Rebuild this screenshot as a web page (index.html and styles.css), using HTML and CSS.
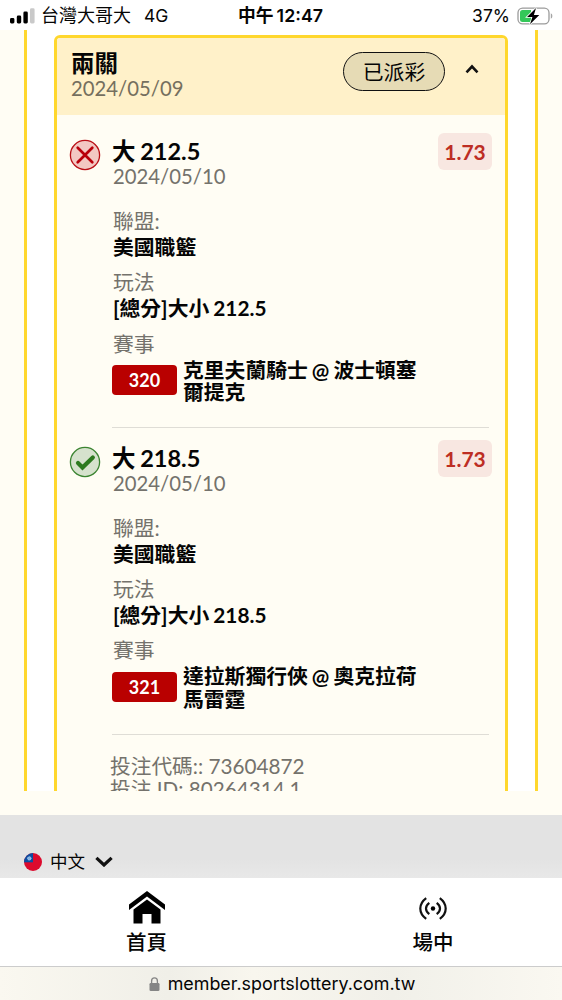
FILE: index.html
```html
<!DOCTYPE html>
<html lang="zh-Hant">
<head>
<meta charset="utf-8">
<title>投注紀錄</title>
<link rel="stylesheet" href="styles.css">
</head>
<body>
<div class="phone">
  <header class="status">
    <div class="carrier">
      <svg class="signal" width="25" height="16" viewBox="0 0 25 16"><rect x="0" y="10" width="4.4" height="5.5" rx="1.4"/><rect x="6.8" y="7.5" width="4.4" height="8" rx="1.4"/><rect x="13.4" y="3.5" width="4.4" height="12" rx="1.4"/><rect x="20" y="0.3" width="4.6" height="15.2" rx="1.4" fill="#c9c9c9"/></svg>
      <span class="carrier-name">台灣大哥大</span><span class="network">4G</span>
    </div>
    <div class="clock"><span>中午</span><span class="time">12:47</span></div>
    <div class="power">
      <span>37%</span>
      <svg width="36" height="18" viewBox="0 0 36 18"><rect x="1" y="1.2" width="31" height="15.6" rx="4.6" fill="#fff" stroke="#9b9b9b" stroke-width="1.3"/><path d="M33.800 6.300q1.600.6 1.600 2.700t-1.600 2.700z" fill="#a5a5a5"/><path d="M5.500 3H14v12H5.500Q3 15 3 12.500V5.500Q3 3 5.500 3z" fill="#34c759"/><path d="M19 1 10 10h5.400l-2.400 7.300L22.300 8h-5.400z" stroke="#fff" stroke-width="1.600" paint-order="stroke"/></svg>
    </div>
  </header>

  <main class="page">
    <div class="panel">
      <section class="ticket">
        <div class="ticket-head">
          <div class="ticket-title"><h1>兩關</h1><p class="date">2024/05/09</p></div>
          <span class="paid">已派彩</span>
          <svg class="caret" width="14" height="10" viewBox="0 0 14 10"><path d="M1.500 8.300 7 2.500l5.500 5.800" fill="none" stroke="#111" stroke-width="2.600"/></svg>
        </div>

        <article class="leg">
          <svg class="mark" width="32" height="32" viewBox="0 0 32 32"><circle cx="16" cy="16" r="14.600" fill="#f3c8c3" stroke="#b90f16" stroke-width="1.300"/><path d="M8.700 8.700l14.600 14.600M23.300 8.700 8.700 23.300" stroke="#b9000b" stroke-width="2.700" stroke-linecap="round"/></svg>
          <div class="leg-body">
            <div class="leg-top"><div><h2>大 212.5</h2><p class="date">2024/05/10</p></div><span class="odds">1.73</span></div>
            <dl>
              <dt>聯盟:</dt><dd>美國職籃</dd>
              <dt>玩法</dt><dd>[總分]大小 212.5</dd>
              <dt>賽事</dt>
              <dd class="match"><span class="code">320</span><span class="teams">克里夫蘭騎士 @ 波士頓塞<br>爾提克</span></dd>
            </dl>
          </div>
        </article>

        <article class="leg">
          <svg class="mark" width="32" height="32" viewBox="0 0 32 32"><circle cx="16" cy="16" r="14.600" fill="#d6e2cd" stroke="#3b8431" stroke-width="1.300"/><path d="M9 17l4.500 4.500L23.800 11.500" fill="none" stroke="#2d7a1f" stroke-width="4.200" stroke-linecap="round" stroke-linejoin="miter"/></svg>
          <div class="leg-body">
            <div class="leg-top"><div><h2>大 218.5</h2><p class="date">2024/05/10</p></div><span class="odds">1.73</span></div>
            <dl>
              <dt>聯盟:</dt><dd>美國職籃</dd>
              <dt>玩法</dt><dd>[總分]大小 218.5</dd>
              <dt>賽事</dt>
              <dd class="match"><span class="code">321</span><span class="teams">達拉斯獨行俠 @ 奧克拉荷<br>馬雷霆</span></dd>
            </dl>
          </div>
        </article>

        <div class="ids"><p>投注代碼:: 73604872</p><p>投注 ID: 80264314.1</p></div>
      </section>
    </div>
  </main>

  <footer class="language">
    <svg width="18" height="18" viewBox="0 0 18 18"><clipPath id="disc"><circle cx="9" cy="9" r="9"/></clipPath><g clip-path="url(#disc)"><rect width="18" height="18" fill="#dc0a2d"/><rect width="9" height="9.300" fill="#0b4ea2"/><circle cx="5.300" cy="5.400" r="1.700" fill="#7db0e4" stroke="#d5e7fa" stroke-width="1" stroke-dasharray=".7 .4"/></g></svg>
    <span>中文</span>
    <svg width="18" height="11" viewBox="0 0 18 11"><path d="M1.400 1.800 9 9l7.600-7.200" fill="none" stroke="#111" stroke-width="3.200"/></svg>
  </footer>

  <nav class="tabs">
    <a class="tab">
      <svg width="38" height="34" viewBox="0 0 38 34"><path d="M19 0 37 13.500V19L19 5.500 1 19v-5.500z"/><path d="M19 8.500 32.500 18.500V32.500h-9v-9.500h-9v9.500h-9v-14z"/></svg>
      <span>首頁</span>
    </a>
    <a class="tab">
      <svg width="38" height="34" viewBox="0 0 38 34"><circle cx="19" cy="17.500" r="2.200"/><g fill="none" stroke="#111" stroke-width="2.200"><path d="M12.200 7.100Q6.300 11.500 6.300 17.500T12.200 27.900M25.800 7.100Q31.700 11.500 31.700 17.500T25.800 27.900"/><path d="M15.300 11.800Q12 14.300 12 17.500t3.300 5.700M22.700 11.800Q26 14.300 26 17.500t-3.300 5.700"/></g></svg>
      <span>場中</span>
    </a>
  </nav>

  <div class="address">
    <svg width="11" height="14" viewBox="0 0 11 14"><rect x=".5" y="6" width="10" height="8" rx="1.300" fill="#858585"/><path d="M2.600 6.500V3.900a2.900 3 0 0 1 5.800 0v2.600" fill="none" stroke="#858585" stroke-width="1.300"/></svg>
    <span>member.sportslottery.com.tw</span>
  </div>
</div>
</body>
</html>
```
FILE: styles.css
```css
* { box-sizing: border-box; }
body, h1, h2, p, dl, dt, dd { margin: 0; }
svg { display: block; flex: none; }
body { background: #fff; color: #050505; font-family: Lato, "Noto Sans CJK TC", sans-serif; }
.phone { width: 562px; height: 1000px; overflow: hidden; display: flex; flex-direction: column; background: #fffdf4; }

.status { height: 30px; flex: none; display: grid; grid-template-columns: 1fr auto 1fr; align-items: center; padding: 1px 9px 0 10px; background: #fff; font: 18px/29px Inter, "Noto Sans CJK TC", sans-serif; }
.carrier, .clock, .power { display: flex; align-items: center; white-space: nowrap; }
.carrier-name { margin-left: 6px; }
.network { margin-left: 13px; font-size: 17.500px; }
.clock { font-size: 17.800px; font-weight: 600; gap: 3px; margin-right: 2px; }
.power { justify-content: flex-end; gap: 7px; font-size: 17.500px; }

.page { height: 761px; flex: none; padding: 0 24px; }
.panel { height: 761px; overflow: hidden; padding: 5px 27px 0; background: #fff; border: solid #ffd72d; border-width: 0 3px; }
.ticket { height: 900px; background: #fffdf4; border: 3px solid #ffd72d; border-radius: 6px; }
.ticket-head { height: 77px; display: flex; align-items: flex-start; padding: 12px 26px 0 14px; background: #fff1c9; border-radius: 3px 3px 0 0; }
.ticket-title { flex: 1; }
.ticket-title h1 { font-size: 23.500px; line-height: 26px; }
.date { font-size: 20.300px; line-height: 24px; color: #74726c; }
.ticket-head .date { color: #756f5e; }
.paid { width: 102px; height: 39px; margin-top: 2px; border: 1.500px solid #111; border-radius: 20px; background: #e6dbb5; font-size: 20.800px; line-height: 37px; text-align: center; }
.caret { margin: 14px 0 0 20px; }

.leg { height: 306.500px; display: flex; padding: 18px 13px 0 12px; }
.mark { margin-top: 6px; }
.leg-body { flex: 1; height: 295px; margin-left: 11px; }
.leg-top { height: 75px; display: flex; justify-content: space-between; align-items: flex-start; padding-top: 5px; }
.leg-top h2 { font-size: 23.500px; line-height: 26px; word-spacing: -1px; }
.leg-top .date { padding-left: 1px; }
.odds { width: 54px; height: 37px; margin-top: -5px; border-radius: 6px; background: #f8e7e1; color: #bd2e24; font-size: 21px; font-weight: 700; line-height: 37px; text-align: center; }
dl { height: 220px; margin-right: 3px; border-bottom: 1px solid #dfddd6; }
dt { font-size: 20.800px; line-height: 26px; color: #74726c; padding-left: 1px; }
dd { font-size: 20.800px; line-height: 25px; font-weight: 700; padding-left: 1px; margin-bottom: 10.300px; word-spacing: -1px; }
.match { display: flex; align-items: center; gap: 6px; padding: 1px 0 0; margin-bottom: 0; }
.code { width: 65px; height: 30px; border-radius: 4px; background: #b90000; color: #fff; font-size: 18px; line-height: 30px; text-align: center; }
.teams { line-height: 22.500px; padding-top: 1px; margin-bottom: -1px; white-space: nowrap; }
.ids { padding: 27px 0 0 53px; font-size: 20.700px; line-height: 23px; color: #74726c; }

.language { height: 63px; flex: none; margin-top: 24px; display: flex; align-items: center; padding: 30px 24px 0; background: linear-gradient(#e3e3e3 70%, #e8e8e8); font-size: 17.500px; }
.language span { margin: -2px 10px 0 8px; }
.tabs { height: 88px; flex: none; display: grid; grid-template-columns: 293px 280px; background: #fff; }
.tab { display: flex; flex-direction: column; align-items: center; padding-top: 13px; }
.tab span { font-size: 20.500px; line-height: 28px; margin-top: 3px; font-weight: 500; }
.address { height: 34px; flex: none; display: flex; justify-content: center; align-items: center; gap: 8px; padding-left: 2px; border-top: 1px solid #ccc; background: linear-gradient(90deg, #faf8f0, #f0efe8 30%, #f8f6ee 45%, #f1f0e9 70%, #faf8f1); font: 17.900px Inter, sans-serif; }
```
